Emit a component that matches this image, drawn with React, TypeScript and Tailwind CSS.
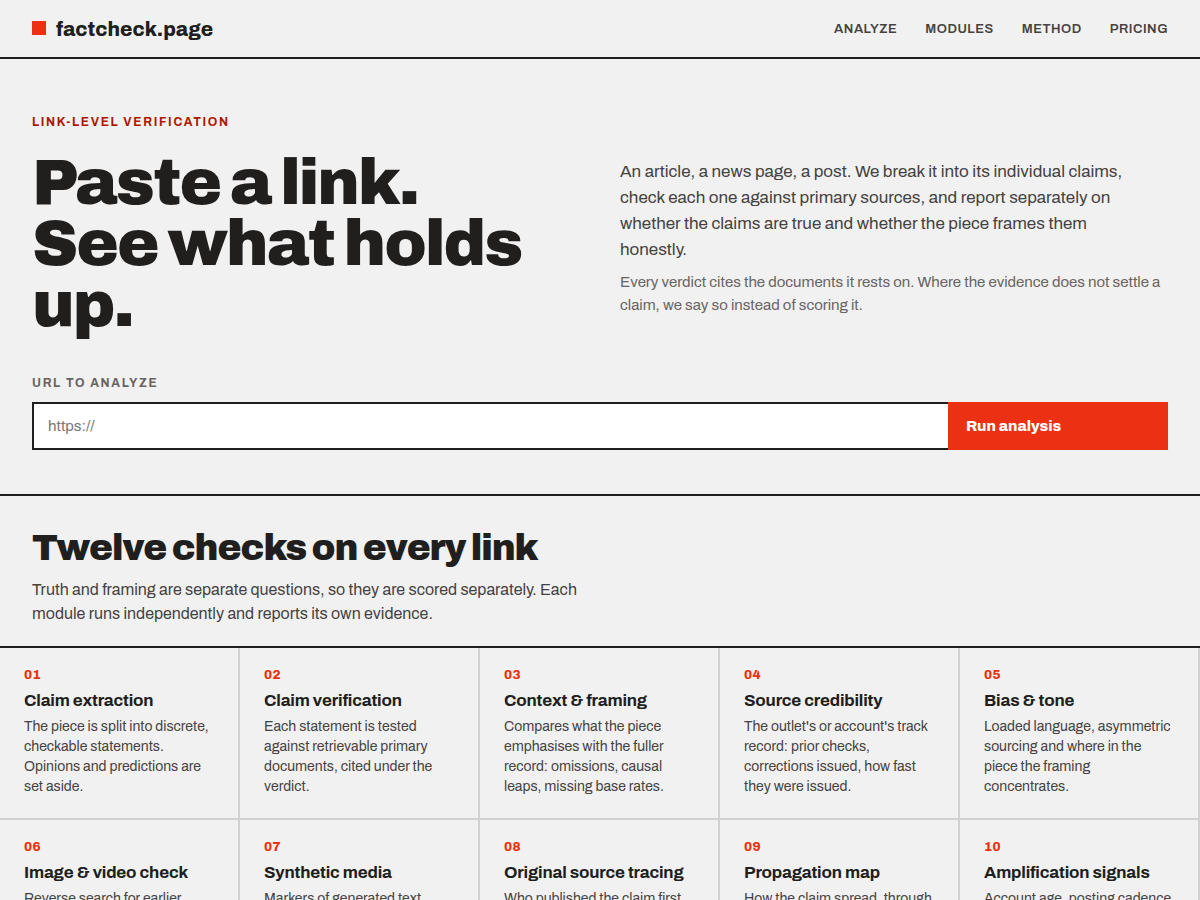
type Module = { id: string; title: string; text: string };

const links = ["Analyze", "Modules", "Method", "Pricing"];

const modules: Module[] = [
  { id: "01", title: "Claim extraction", text: "The piece is split into discrete, checkable statements. Opinions and predictions are set aside." },
  { id: "02", title: "Claim verification", text: "Each statement is tested against retrievable primary documents, cited under the verdict." },
  { id: "03", title: "Context & framing", text: "Compares what the piece emphasises with the fuller record: omissions, causal leaps, missing base rates." },
  { id: "04", title: "Source credibility", text: "The outlet's or account's track record: prior checks, corrections issued, how fast they were issued." },
  { id: "05", title: "Bias & tone", text: "Loaded language, asymmetric sourcing and where in the piece the framing concentrates." },
  { id: "06", title: "Image & video check", text: "Reverse search for earlier" },
  { id: "07", title: "Synthetic media", text: "Markers of generated text" },
  { id: "08", title: "Original source tracing", text: "Who published the claim first" },
  { id: "09", title: "Propagation map", text: "How the claim spread, through" },
  { id: "10", title: "Amplification signals", text: "Account age, posting cadence" },
];

function Header() {
  return (
    <header className="flex items-center justify-between border-b-2 border-[#201f1e] px-8 pt-[13px] pb-3">
      <a href="#" className="flex items-center gap-2.5 text-xl leading-8 font-extrabold">
        <span className="mb-0.5 size-3.5 bg-[#ec3013]" />
        factcheck.page
      </a>
      <nav className="flex gap-7 text-[13px] leading-5 font-semibold tracking-[0.04em] text-[#444241] uppercase">
        {links.map((link) => (
          <a key={link} href={`#${link.toLowerCase()}`}>{link}</a>
        ))}
      </nav>
    </header>
  );
}

function Hero() {
  return (
    <section id="analyze" className="border-b-2 border-[#201f1e] px-8 pt-[54px] pb-11">
      <p className="text-xs leading-[18px] font-bold tracking-[0.14em] text-[#ae1800] uppercase">
        Link-level verification
      </p>
      <div className="mt-[21px] grid grid-cols-1 items-start gap-10 md:grid-cols-2">
        <h1 className="text-[64px] leading-[61px] font-black tracking-[-0.03em]">
          Paste a link.
          <br />
          See what holds up.
        </h1>
        <div className="flex flex-col gap-2 pt-[7px]">
          <p className="max-w-[530px] text-[17px] leading-[26px] text-[#444241]">
            An article, a news page, a post. We break it into its individual claims, check each one against primary
            sources, and report separately on whether the claims are true and whether the piece frames them honestly.
          </p>
          <p className="text-[15px] leading-[23px] text-[#666362]">
            Every verdict cites the documents it rests on. Where the evidence does not settle a claim, we say so instead
            of scoring it.
          </p>
        </div>
      </div>
      <form className="mt-[39px]" onSubmit={(event) => event.preventDefault()}>
        <label htmlFor="url" className="block text-xs leading-[18px] font-bold tracking-[0.14em] text-[#666362] uppercase">
          URL to analyze
        </label>
        <div className="mt-2.5 flex h-12">
          <input
            id="url"
            type="url"
            placeholder="https://"
            className="min-w-0 flex-1 border-2 border-r-0 border-[#201f1e] bg-white px-3.5 text-[15px] outline-none placeholder:text-[#757575]"
          />
          <button type="submit" className="w-[220px] bg-[#ec3013] px-[18px] text-left text-[15px] font-extrabold text-white">
            Run analysis
          </button>
        </div>
      </form>
    </section>
  );
}

function ModuleCard({ id, title, text }: Module) {
  return (
    <li className="border-r-2 border-b-2 border-[#d3d1d0] px-6 pt-[17px] pb-[21px]">
      <p className="text-[13px] leading-5 font-extrabold tracking-[0.02em] text-[#ec3013]">{id}</p>
      <h3 className="mt-1 text-[17px] leading-6 font-bold tracking-[-0.01em]">{title}</h3>
      <p className="mt-1 text-sm leading-5 text-[#444241]">{text}</p>
    </li>
  );
}

function Modules() {
  return (
    <section id="modules">
      <div className="border-b-2 border-[#201f1e] px-8 pt-8 pb-5">
        <h2 className="text-4xl leading-10 font-black tracking-[-0.03em]">
          Twelve checks on every link
        </h2>
        <p className="mt-2.5 max-w-[560px] text-base leading-6 text-[#444241]">
          Truth and framing are separate questions, so they are scored separately. Each module runs independently and
          reports its own evidence.
        </p>
      </div>
      <ul className="grid grid-cols-2 md:grid-cols-5">
        {modules.map((module) => (
          <ModuleCard key={module.id} {...module} />
        ))}
      </ul>
    </section>
  );
}

export default function App() {
  return (
    <div className="min-h-screen bg-[#f2f1f1] font-[Archivo,'Liberation_Sans',sans-serif] text-[#201f1e]">
      <Header />
      <main>
        <Hero />
        <Modules />
      </main>
    </div>
  );
}
